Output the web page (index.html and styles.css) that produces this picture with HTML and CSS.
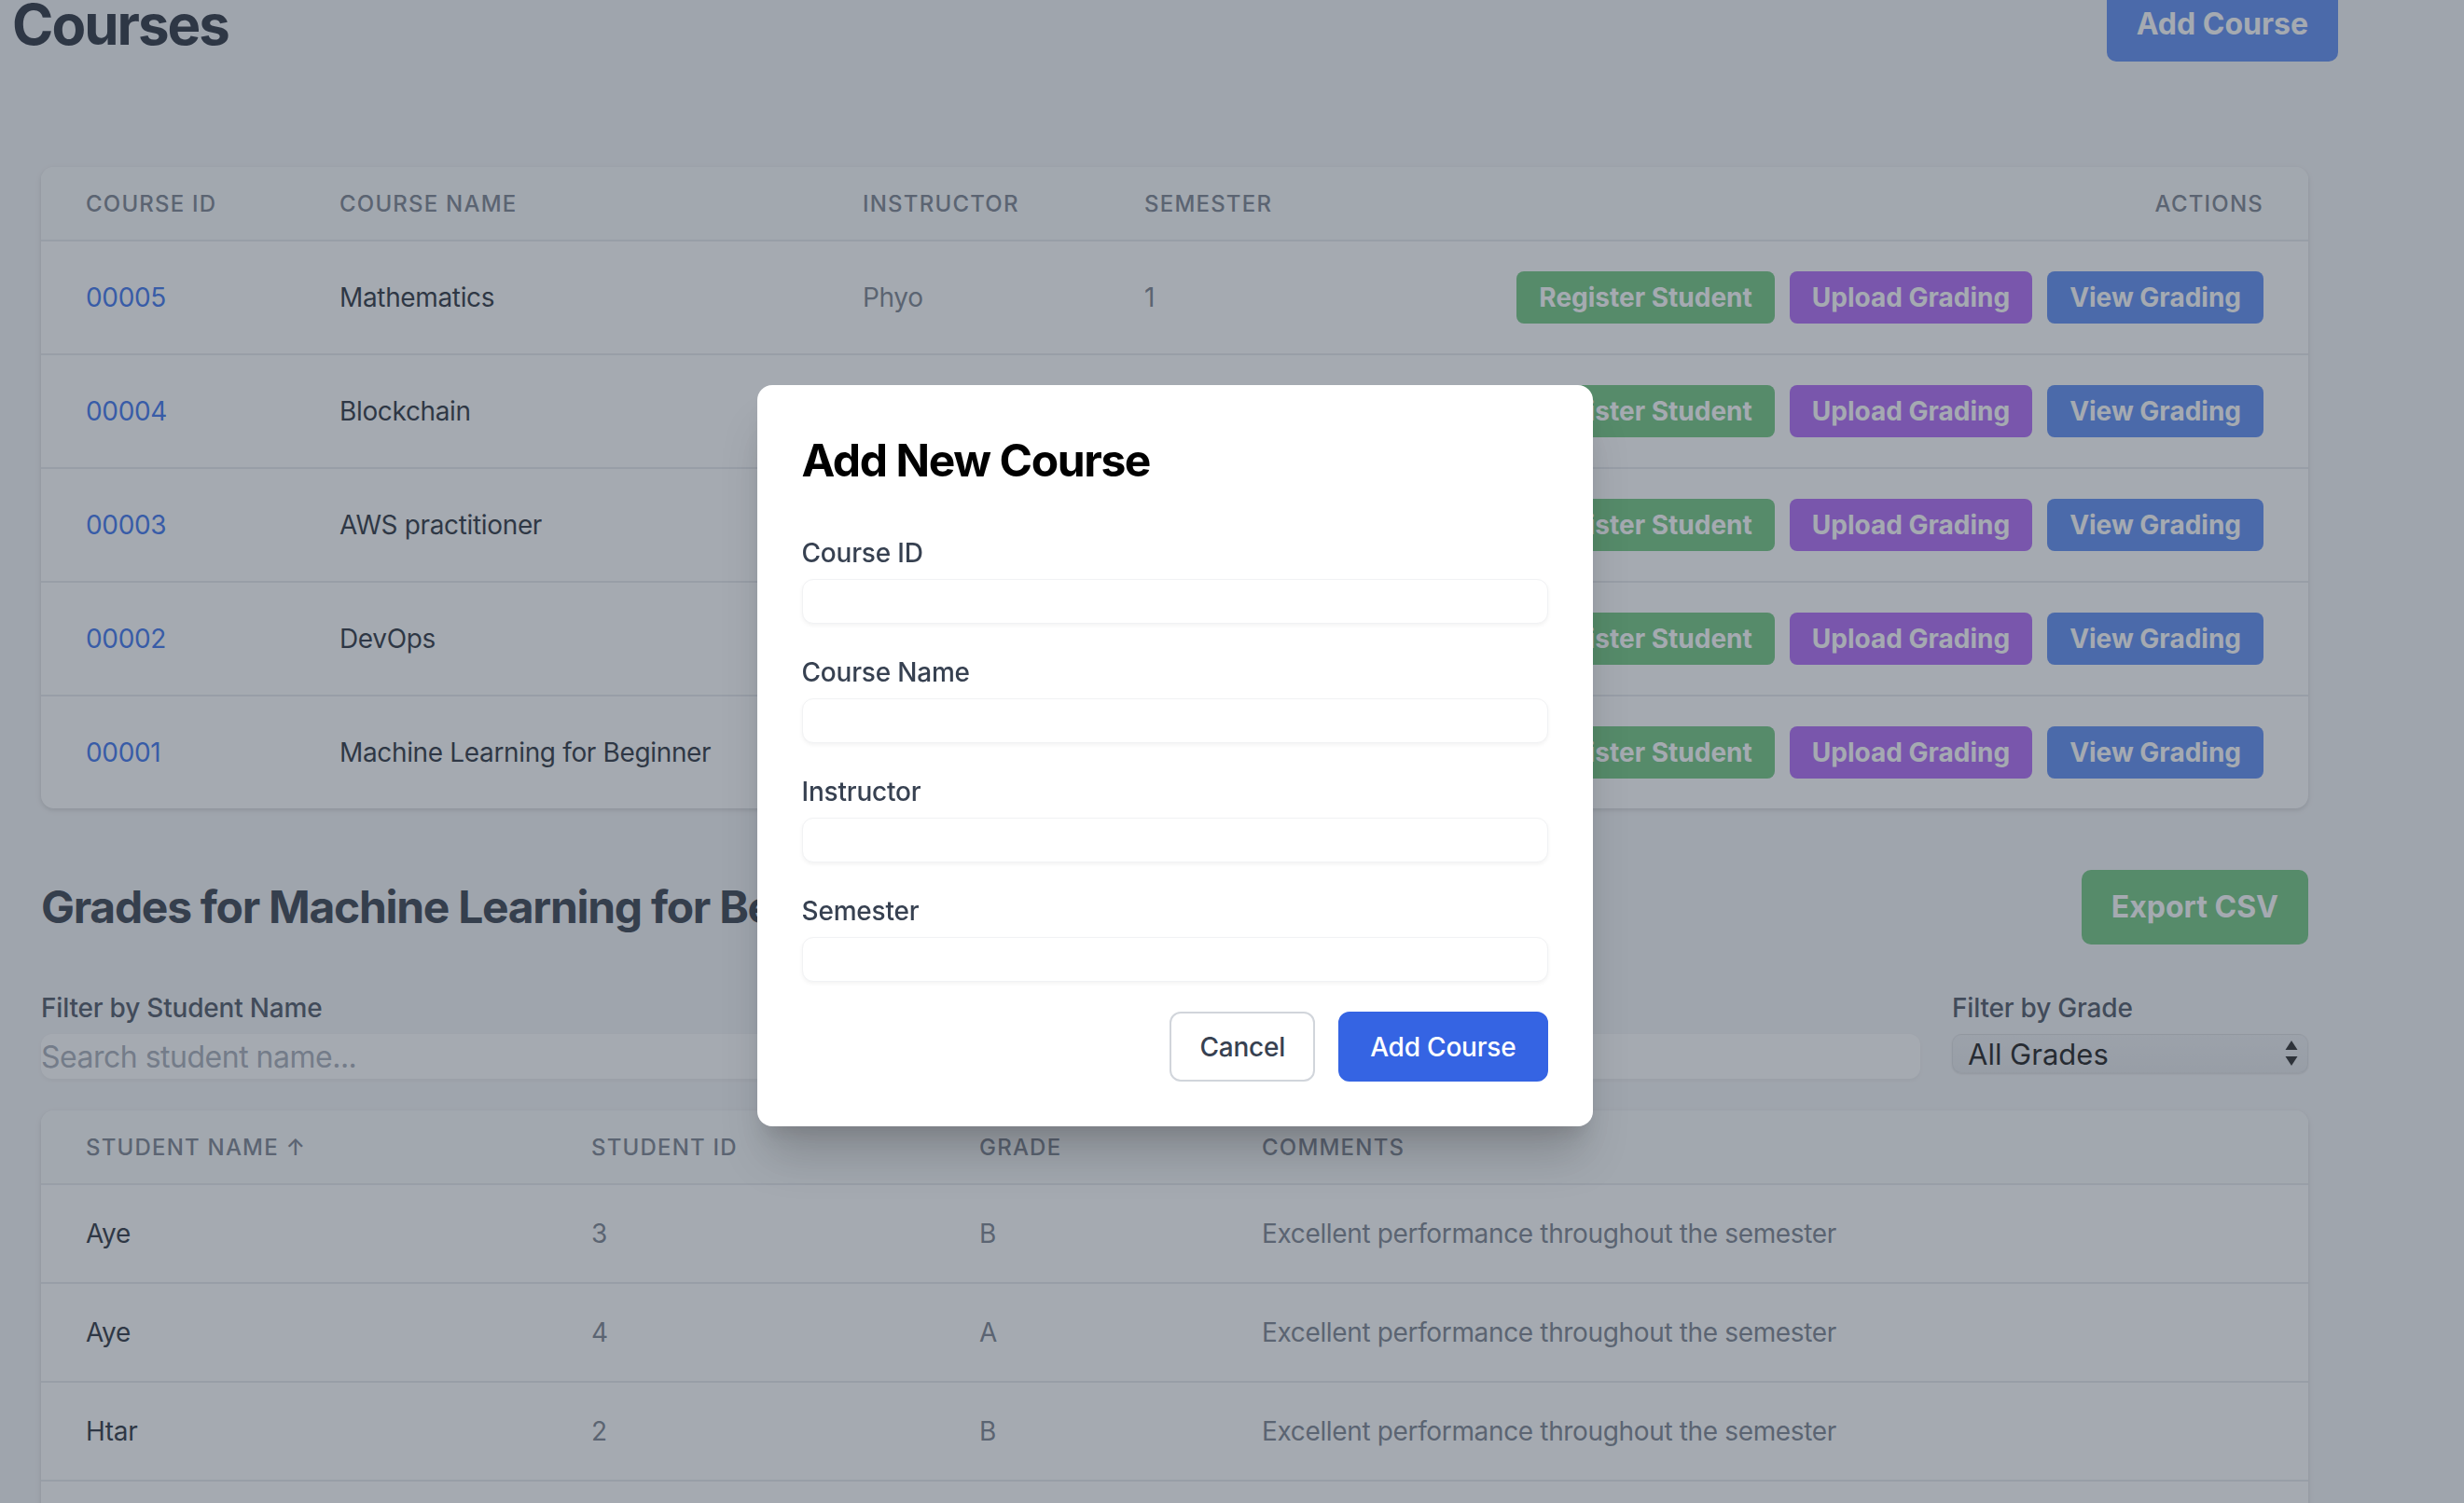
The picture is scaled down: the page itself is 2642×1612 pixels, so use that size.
FILE: index.html
```html
<!DOCTYPE html>
<html lang="en">
<head>
<meta charset="utf-8">
<title>Courses</title>
<link rel="stylesheet" href="styles.css">
</head>
<body>
<div class="page">
  <header class="page-header">
    <h1 class="page-title">Courses</h1>
    <button class="btn btn-lg btn-blue">Add Course</button>
  </header>

  <main class="content">
    <div class="card">
      <table class="table">
        <colgroup>
          <col class="c-id"><col class="c-name"><col class="c-instr"><col class="c-sem"><col>
        </colgroup>
        <thead>
          <tr><th>Course ID</th><th>Course Name</th><th>Instructor</th><th>Semester</th><th class="right">Actions</th></tr>
        </thead>
        <tbody>
          <tr>
            <td><a class="link">00005</a></td><td class="strong">Mathematics</td><td class="muted">Phyo</td><td class="muted">1</td>
            <td class="right"><div class="actions"><button class="btn btn-green">Register Student</button><button class="btn btn-purple">Upload Grading</button><button class="btn btn-blue">View Grading</button></div></td>
          </tr>
          <tr>
            <td><a class="link">00004</a></td><td class="strong">Blockchain</td><td class="muted">Phyo</td><td class="muted">1</td>
            <td class="right"><div class="actions"><button class="btn btn-green">Register Student</button><button class="btn btn-purple">Upload Grading</button><button class="btn btn-blue">View Grading</button></div></td>
          </tr>
          <tr>
            <td><a class="link">00003</a></td><td class="strong">AWS practitioner</td><td class="muted">Phyo</td><td class="muted">1</td>
            <td class="right"><div class="actions"><button class="btn btn-green">Register Student</button><button class="btn btn-purple">Upload Grading</button><button class="btn btn-blue">View Grading</button></div></td>
          </tr>
          <tr>
            <td><a class="link">00002</a></td><td class="strong">DevOps</td><td class="muted">Phyo</td><td class="muted">1</td>
            <td class="right"><div class="actions"><button class="btn btn-green">Register Student</button><button class="btn btn-purple">Upload Grading</button><button class="btn btn-blue">View Grading</button></div></td>
          </tr>
          <tr>
            <td><a class="link">00001</a></td><td class="strong">Machine Learning for Beginner</td><td class="muted">Phyo</td><td class="muted">1</td>
            <td class="right"><div class="actions"><button class="btn btn-green">Register Student</button><button class="btn btn-purple">Upload Grading</button><button class="btn btn-blue">View Grading</button></div></td>
          </tr>
        </tbody>
      </table>
    </div>

    <section class="grades">
      <div class="grades-head">
        <h2 class="section-title">Grades for Machine Learning for Beginner</h2>
        <button class="btn btn-lg btn-green">Export CSV</button>
      </div>

      <div class="filters">
        <div class="filter filter-name">
          <label class="filter-label">Filter by Student Name</label>
          <input class="search" type="text" placeholder="Search student name...">
        </div>
        <div class="filter filter-grade">
          <label class="filter-label">Filter by Grade</label>
          <div class="select">
            <span>All Grades</span>
            <svg class="select-arrows" width="14" height="30" viewBox="0 0 14 30"><path d="M7 1 L13.5 11 L0.5 11 Z" fill="#111"/><path d="M0.5 18 L13.5 18 L7 28 Z" fill="#111"/></svg>
          </div>
        </div>
      </div>

      <div class="card">
        <table class="table grades-table">
          <colgroup>
            <col class="g-name"><col class="g-id"><col class="g-grade"><col>
          </colgroup>
          <thead>
            <tr><th>Student Name <span class="sort">&#8593;</span></th><th>Student ID</th><th>Grade</th><th>Comments</th></tr>
          </thead>
          <tbody>
            <tr><td class="strong">Aye</td><td class="muted">3</td><td class="muted">B</td><td class="muted">Excellent performance throughout the semester</td></tr>
            <tr><td class="strong">Aye</td><td class="muted">4</td><td class="muted">A</td><td class="muted">Excellent performance throughout the semester</td></tr>
            <tr><td class="strong">Htar</td><td class="muted">2</td><td class="muted">B</td><td class="muted">Excellent performance throughout the semester</td></tr>
            <tr><td class="strong">Kyaw</td><td class="muted">1</td><td class="muted">A</td><td class="muted">Excellent performance throughout the semester</td></tr>
          </tbody>
        </table>
      </div>
    </section>
  </main>
</div>

<div class="overlay">
  <div class="modal">
    <h3 class="modal-title">Add New Course</h3>
    <form class="modal-form">
      <div class="field"><label class="field-label">Course ID</label><input class="field-input" type="text"></div>
      <div class="field"><label class="field-label">Course Name</label><input class="field-input" type="text"></div>
      <div class="field"><label class="field-label">Instructor</label><input class="field-input" type="text"></div>
      <div class="field"><label class="field-label">Semester</label><input class="field-input" type="text"></div>
      <div class="modal-actions">
        <button type="button" class="btn-cancel">Cancel</button>
        <button type="button" class="btn-primary">Add Course</button>
      </div>
    </form>
  </div>
</div>
</body>
</html>
```

FILE: styles.css
```css
* { box-sizing: border-box; }

html, body {
  margin: 0;
  padding: 0;
  height: 100%;
  overflow: hidden;
}

body {
  background: #f3f4f6;
  font-family: Inter, "Noto Sans", "Liberation Sans", sans-serif;
  color: #111827;
}

.page {
  width: 2642px;
}

/* header */
.page-header {
  display: flex;
  justify-content: space-between;
  align-items: center;
  margin: -14px 135px 0 13px;
  height: 80px;
}

.page-title {
  margin: 0;
  font-size: 60px;
  line-height: 72px;
  font-weight: 700;
  color: #111827;
  letter-spacing: -2px;
}

.content {
  margin: 113px 167px 0 44px;
}

/* buttons */
.btn {
  border: none;
  border-radius: 8px;
  font-family: inherit;
  color: #fff;
  font-size: 28px;
  line-height: 40px;
  font-weight: 700;
  padding: 8px 24px;
  white-space: nowrap;
}

.btn-lg {
  font-size: 32px;
  line-height: 48px;
  font-weight: 700;
  padding: 16px 32px;
  border-radius: 10px;
}

.btn-blue { background: #4b7ff0; }
.btn-green { background: #60c070; }
.btn-purple { background: #a657f4; }

/* card + table */
.card {
  background: #fff;
  border-radius: 14px;
  box-shadow: 0 2px 6px rgba(0, 0, 0, 0.1), 0 2px 4px rgba(0, 0, 0, 0.06);
  overflow: hidden;
}

.table {
  width: 100%;
  border-collapse: collapse;
  table-layout: fixed;
}

.c-id { width: 272px; }
.c-name { width: 561px; }
.c-instr { width: 302px; }
.c-sem { width: 360px; }

.g-name { width: 542px; }
.g-id { width: 416px; }
.g-grade { width: 303px; }

.table thead tr {
  background: #f9fafb;
  border-bottom: 2px solid #e5e7eb;
}

.table th {
  text-align: left;
  padding: 25px 48px 23px;
  font-size: 24px;
  line-height: 30px;
  font-weight: 500;
  color: #6b7280;
  text-transform: uppercase;
  letter-spacing: 0.05em;
}

.table th.right, .table td.right { text-align: right; }

.table tbody tr + tr { border-top: 2px solid #e5e7eb; }

.table td {
  padding: 32px 48px;
  font-size: 28px;
  line-height: 40px;
  color: #111827;
  white-space: nowrap;
  letter-spacing: -0.35px;
}

.table td.muted { color: #6b7280; }
.table td.strong { color: #111827; }

.link { color: #2563eb; }

.actions {
  display: inline-flex;
  gap: 16px;
  vertical-align: middle;
  letter-spacing: 0;
}

.sort { font-weight: 500; }

/* grades section */
.grades-head {
  margin-top: 66px;
  display: flex;
  justify-content: space-between;
  align-items: center;
}

.section-title {
  margin: 0;
  font-size: 48px;
  line-height: 64px;
  font-weight: 700;
  color: #1f2937;
  letter-spacing: -1.3px;
}

.filters {
  margin-top: 48px;
  display: flex;
  gap: 34px;
  margin-bottom: 34px;
}

.filter { display: flex; flex-direction: column; }
.filter-name { flex: 1; }
.filter-grade { width: 382px; }

.filter-label {
  font-size: 28px;
  line-height: 40px;
  font-weight: 500;
  color: #374151;
  margin-bottom: 8px;
  letter-spacing: -0.2px;
}

.search {
  height: 48px;
  border: none;
  border-radius: 12px;
  background: #fff;
  box-shadow: 0 2px 4px rgba(0, 0, 0, 0.05);
  padding: 0;
  font-family: inherit;
  font-size: 32px;
  letter-spacing: -0.5px;
  color: #111827;
  outline: none;
}

.search::placeholder { color: #9ca3af; }

.select {
  height: 42px;
  border-radius: 10px;
  background: linear-gradient(#eceef1, #e4e6e9);
  border: 1px solid rgba(0, 0, 0, 0.06);
  box-shadow: 0 1px 2px rgba(0, 0, 0, 0.12);
  display: flex;
  align-items: center;
  justify-content: space-between;
  padding: 0 10px 0 16px;
  font-size: 31px;
  color: #000;
}

.select-arrows { display: block; }

/* overlay + modal */
.overlay {
  position: fixed;
  inset: 0;
  background: rgba(75, 85, 99, 0.5);
  display: flex;
  justify-content: center;
  align-items: center;
  padding: 9px 123px 0 0;
}

.modal {
  width: 896px;
  background: #fff;
  border-radius: 16px;
  padding: 49px 48px 48px;
  box-shadow: 0 40px 50px -10px rgba(0, 0, 0, 0.18), 0 16px 20px -8px rgba(0, 0, 0, 0.1);
}

.modal-title {
  margin: 0 0 47px;
  font-size: 48px;
  line-height: 64px;
  font-weight: 700;
  color: #000;
  letter-spacing: -1.4px;
}

.modal-form {
  display: flex;
  flex-direction: column;
  gap: 32px;
}

.field { display: flex; flex-direction: column; }

.field-label {
  font-size: 28px;
  line-height: 40px;
  font-weight: 500;
  color: #374151;
  letter-spacing: -0.2px;
}

.field-input {
  margin-top: 8px;
  height: 48px;
  border: 1px solid #f1f2f4;
  border-radius: 12px;
  background: #fff;
  box-shadow: 0 2px 4px rgba(0, 0, 0, 0.05);
  outline: none;
}

.modal-actions {
  display: flex;
  justify-content: flex-end;
  gap: 25px;
  margin-top: 0;
}

.btn-cancel, .btn-primary {
  height: 75px;
  border-radius: 12px;
  font-family: inherit;
  font-size: 28px;
  font-weight: 500;
  padding: 0 32px;
  white-space: nowrap;
  letter-spacing: -0.2px;
}

.btn-cancel {
  background: #fff;
  border: 2px solid #d1d5db;
  color: #374151;
  padding: 0 30px;
}

.btn-primary {
  background: #3564e3;
  border: 2px solid #3564e3;
  color: #fff;
}
```
